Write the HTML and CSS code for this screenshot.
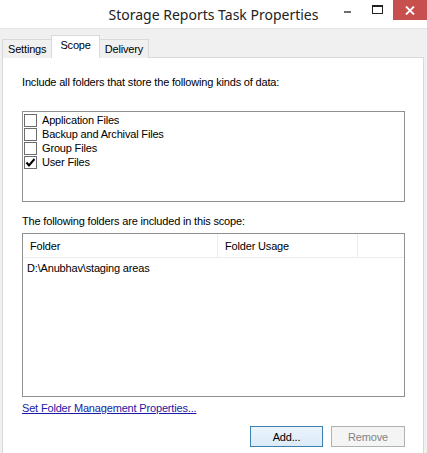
FILE: index.html
```html
<!DOCTYPE html>
<html lang="en">
<head>
    <meta charset="UTF-8">
    <title>Storage Reports Task Properties</title>
    <link rel="stylesheet" href="styles.css">
</head>
<body>

    <div class="window">
        <div class="titlebar">
            <span class="titlebar__title">Storage Reports Task Properties</span>
            <div class="titlebar__controls">
                <span class="titlebar__btn titlebar__btn--min">
                    <svg width="10" height="10" viewBox="0 0 10 10"><rect x="1" y="6" width="7" height="2" fill="#6e6e6e"/></svg>
                </span>
                <span class="titlebar__btn titlebar__btn--max">
                    <svg width="11" height="10" viewBox="0 0 11 10"><rect x="0.5" y="0.5" width="10" height="8" fill="none" stroke="#222"/><rect x="0" y="0" width="11" height="2" fill="#222"/></svg>
                </span>
                <span class="titlebar__btn titlebar__btn--close">
                    <svg width="10" height="9" viewBox="0 0 10 9"><path d="M1 0.5 L9 8.5 M9 0.5 L1 8.5" stroke="#fff" stroke-width="1.8"/></svg>
                </span>
            </div>
        </div>

        <div class="tabs">
            <span class="tabs__tab">Settings</span>
            <span class="tabs__tab tabs__tab--active">Scope</span>
            <span class="tabs__tab">Delivery</span>
        </div>

        <div class="panel">
            <p class="panel__label">Include all folders that store the following kinds of data:</p>

            <div class="checklist">
                <label class="checklist__item"><span class="checkbox"></span>Application Files</label>
                <label class="checklist__item"><span class="checkbox"></span>Backup and Archival Files</label>
                <label class="checklist__item"><span class="checkbox"></span>Group Files</label>
                <label class="checklist__item">
                    <span class="checkbox">
                        <svg width="11" height="11" viewBox="0 0 11 11"><path d="M1.5 5.5 L4 8.5 L9.5 2" fill="none" stroke="#000" stroke-width="2"/></svg>
                    </span>User Files
                </label>
            </div>

            <p class="panel__label panel__label--list">The following folders are included in this scope:</p>

            <div class="listview">
                <div class="listview__header">
                    <span class="listview__col listview__col--folder">Folder</span>
                    <span class="listview__col listview__col--usage">Folder Usage</span>
                    <span class="listview__col listview__col--rest"></span>
                </div>
                <div class="listview__row">D:\Anubhav\staging areas</div>
            </div>

            <a href="#" class="panel__link">Set Folder Management Properties...</a>

            <div class="buttons">
                <button class="button button--default">Add...</button>
                <button class="button" disabled>Remove</button>
            </div>
        </div>
    </div>

</body>
</html>
```

FILE: styles.css
```css
* {
    margin: 0;
    padding: 0;
    box-sizing: border-box;
}

body {
    background: #f0f0f0;
    font-family: 'Liberation Sans', Arial, sans-serif;
    font-size: 11px;
    letter-spacing: -0.17px;
    color: #000;
}

.window {
    width: 427px;
    height: 453px;
    overflow: hidden;
    background: #f0f0f0;
}

/* title bar */
.titlebar {
    height: 29px;
    display: flex;
    align-items: flex-start;
    background: #ffffff;
    border-bottom: 1px solid #e3e3e3;
    position: relative;
}

.titlebar__title {
    position: absolute;
    left: 0;
    right: 0;
    top: 5px;
    text-align: center;
    font-family: 'Noto Sans', 'Open Sans', sans-serif;
    font-size: 14px;
    letter-spacing: 0;
    color: #222;
}

.titlebar__controls {
    margin-left: auto;
    display: flex;
    align-items: flex-start;
}

.titlebar__btn {
    display: flex;
    align-items: center;
    justify-content: center;
    height: 20px;
}

.titlebar__btn--min {
    width: 27px;
}

.titlebar__btn--max {
    width: 32px;
    padding-bottom: 1px;
}

.titlebar__btn--close {
    width: 34px;
    background: #c7504f;
}

/* tabs */
.tabs {
    display: flex;
    align-items: flex-end;
    padding-left: 2px;
    margin-top: 5px;
    height: 23px;
    position: relative;
    z-index: 1;
}

.tabs__tab {
    height: 19px;
    padding: 3px 5px 0;
    background: #f0f0f0;
    border: 1px solid #d9d9d9;
    border-bottom: none;
    color: #000;
    margin-bottom: -1px;
}

.tabs__tab + .tabs__tab {
    border-left: none;
}

.tabs__tab--active {
    height: 23px;
    padding: 3px 8px 0;
    background: #fff;
    border-left: 1px solid #d9d9d9 !important;
    margin-left: -1px;
    margin-right: -1px;
    position: relative;
}

.tabs__tab--active + .tabs__tab {
    border-left: 1px solid #d9d9d9;
}

/* panel */
.panel {
    margin: 0 3px 0 2px;
    height: 400px;
    background: #fff;
    border: 1px solid #d9d9d9;
    padding: 18px 18px 0 19px;
    display: flex;
    flex-direction: column;
}

.panel__label {
    line-height: 13px;
}

.panel__label--list {
    margin-top: 13px;
}

.checklist {
    margin-top: 22px;
    height: 91px;
    border: 1px solid #8f8f8f;
    padding: 1px 1px;
    display: flex;
    flex-direction: column;
}

.checklist__item {
    display: flex;
    align-items: center;
    height: 14px;
    gap: 5px;
}

.checkbox {
    width: 13px;
    height: 13px;
    border: 1px solid #6d6d6d;
    background: #fff;
    display: flex;
    align-items: center;
    justify-content: center;
}

/* list view */
.listview {
    margin-top: 5px;
    height: 164px;
    border: 1px solid #8f8f8f;
}

.listview__header {
    display: flex;
    height: 24px;
    border-bottom: 1px solid #ececec;
}

.listview__col {
    display: flex;
    align-items: center;
    padding-left: 7px;
    border-right: 1px solid #ececec;
}

.listview__col--folder {
    width: 195px;
}

.listview__col--usage {
    width: 140px;
}

.listview__col--rest {
    width: 45px;
    border-right: none;
}

.listview__row {
    padding: 4px 0 0 4px;
    line-height: 13px;
}

.panel__link {
    margin-top: 5px;
    align-self: flex-start;
    line-height: 13px;
    color: #1a1aa6;
}

.buttons {
    margin-top: 11px;
    display: flex;
    justify-content: flex-end;
    gap: 8px;
}

.button {
    width: 74px;
    height: 21px;
    font-family: 'Liberation Sans', Arial, sans-serif;
    font-size: 11px;
    letter-spacing: -0.17px;
    border: 1px solid #adb2b5;
    background: #f4f4f4;
    color: #838383;
}

.button--default {
    width: 73px;
    border-color: #3c7fb1;
    background: linear-gradient(#eaf3fb, #dcebf9);
    color: #000;
}
```
